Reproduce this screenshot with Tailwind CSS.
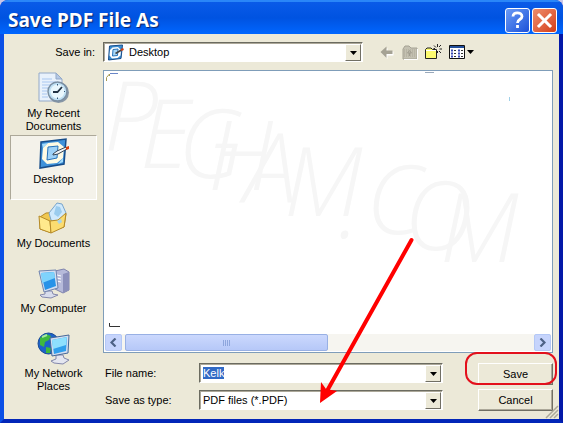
<!DOCTYPE html>
<html lang="en">
<head>
  <meta charset="UTF-8" />
  <meta name="viewport" content="width=device-width, initial-scale=1.0" />
  <title>Save PDF File As</title>
  <script src="https://cdn.jsdelivr.net/npm/@tailwindcss/browser@4"></script>
</head>
<body class="relative min-h-screen flex flex-col bg-[#c9c6e8] font-['Liberation_Sans',Arial,sans-serif] text-[11px] leading-[13px] text-black">
  <div class="flex-1 flex flex-col rounded-t-lg overflow-hidden bg-[#0a35c8]">

    <!-- Title bar -->
    <header class="h-[34px] shrink-0 flex items-center gap-[2px] pl-2 pr-[6px] pt-1 bg-linear-to-b from-[#0a5be8] via-[#0053e1] to-[#0066ff] border-t-2 border-[#2a86f8]">
      <h1 class="flex-1 font-['Noto_Sans',sans-serif] text-[19px] leading-6 font-bold text-white [text-shadow:1px_1px_1px_#0a246a]">Save PDF File As</h1>
      <button aria-label="Help" class="size-[25px] rounded-[3px] border border-white bg-linear-to-br from-[#6c9bf5] to-[#1c4fd8] flex items-center justify-center">
        <svg width="15" height="18" viewBox="0 0 15 18" fill="none" stroke="#fff" stroke-width="2.8"><path d="M3 5.5C3 2.8 5 1.8 7.3 1.8S12 3 12 5.5C12 8.5 7.5 8 7.5 12"/><path d="M7.5 14v3"/></svg>
      </button>
      <button aria-label="Close" class="size-[25px] rounded-[3px] border border-white bg-linear-to-br from-[#ee8d6c] to-[#d33b12] flex items-center justify-center">
        <svg width="17" height="17" viewBox="0 0 17 17" stroke="#fff" stroke-width="3" stroke-linecap="square"><path d="M3 3l11 11M14 3L3 14"/></svg>
      </button>
    </header>

    <div class="flex-1 flex flex-col bg-[#ece9d8] border-4 border-t-0 border-l-[#0b50e6] border-r-[#0318a8] border-b-[#0226b8] pb-2 pr-[6px]">

      <!-- Toolbar -->
      <div class="h-9 flex items-center">
        <label for="folder" class="w-[99px] pr-2 text-right">Save in:</label>
        <div class="relative w-[260px] h-5">
          <select id="folder" class="appearance-none w-full h-full pl-[25px] bg-white border border-t-[#6b6b60] border-l-[#6b6b60] border-b-white border-r-white shadow-[inset_1px_1px_0_#aca899] outline-none">
            <option>Desktop</option>
          </select>
          <svg class="absolute left-1 top-[2px] pointer-events-none" width="17" height="17" viewBox="0 0 34 32"><path d="M5 3l26-2-3 27-25 3z" fill="#3c8fd2" stroke="#174d8a" stroke-width="2"/><path d="M11 6l11-1 6 6-1 11-6 5-11 1-5-6 1-11z" fill="#fff"/><path d="M12 10l10-1-1 13-10 1z" fill="#a8d8f8" stroke="#2773b8" stroke-width="2"/><path d="M17 18l12-7" stroke="#444" stroke-width="3"/><path d="M28 11l5-2" stroke="#d43c10" stroke-width="4"/></svg>
          <span class="absolute right-[2px] top-[2px] w-4 h-[17px] bg-[#ece9d8] border border-t-white border-l-white border-r-[#716f64] border-b-[#716f64] flex items-center justify-center pointer-events-none">
            <svg width="7" height="4" viewBox="0 0 7 4"><path d="M0 0h7L3.5 4z"/></svg>
          </span>
        </div>
        <div class="flex items-center gap-[7px] ml-[17px]">
          <button aria-label="Back" class="pr-[1px]">
            <svg width="14" height="14" viewBox="0 0 14 14"><path d="M1.500 8L7.500 3v3.500h6v4H7.500v3.500z" fill="#fff"/><path d="M.5 7L6.500 1.500v4H12.500v3.500H6.500v4z" fill="#a5a294"/></svg>
          </button>
          <button aria-label="Up one level">
            <svg width="16" height="15" viewBox="0 0 16 15"><path d="M1 4l2-3h4l2 2h6v11H1z" fill="#c4c1b2" stroke="#a5a294"/><path d="M15.500 4v10.500H2" stroke="#fff" fill="none"/><path d="M2 5h12M2 7h12M2 9h12M2 11h12" stroke="#aaa797" stroke-dasharray="1 1"/><path d="M5.500 8l2-2.500 2 2.500zM7.500 8v3" stroke="#a09d90" fill="none"/></svg>
          </button>
          <button aria-label="Create new folder">
            <svg width="17" height="16" viewBox="0 0 17 16"><path d="M.5 14.500v-9l1.500-1.500h4l1.500 1.500h4v9z" fill="#fdfb70" stroke="#222"/><path d="M1 6.500h10" stroke="#fff"/><path d="M12.500 0v3M12.500 7v2M9 1.500l2 2M16 1l-2 2M14.500 5H17M14 7l2 2M8.500 4.500H10" stroke="#222"/></svg>
          </button>
          <button aria-label="View menu" class="flex items-center gap-[2px]">
            <svg width="16" height="14" viewBox="0 0 16 14"><path d="M.5.5h15v13H.5z" fill="#fff" stroke="#111"/><path d="M1 2h14" stroke="#234f9c" stroke-width="2"/><path d="M2 5.500h2M9 5.500h2M2 8.500h2M9 8.500h2M2 11.500h2M9 11.500h2" stroke="#3a4ab8" stroke-width="2"/><path d="M5 5.500h2M12 5.500h2M5 8.500h2M12 8.500h2M5 11.500h2M12 11.500h2" stroke="#333"/></svg>
            <svg width="7" height="4" viewBox="0 0 7 4"><path d="M0 0h7L3.500 4z"/></svg>
          </button>
        </div>
      </div>

      <div class="flex-1 flex">
        <!-- Places bar -->
        <nav class="w-[87px] ml-[6px] mr-[6px] flex flex-col text-center">
          <button class="h-[65px] flex flex-col items-center pt-[2px] gap-[2px]">
            <svg width="34" height="33" viewBox="0 0 34 33"><path d="M2 1h17l6 6v22H2z" fill="#e8f1fc" stroke="#93a9c8"/><path d="M19 1v6h6z" fill="#b4c8e6" stroke="#93a9c8"/><path d="M5 7h10M5 10h14M5 13h8M5 16h6M5 19h5M5 22h5M5 25h6" stroke="#a9c7f0"/><circle cx="21.500" cy="20.500" r="10.500" fill="#8796a5"/><circle cx="20.500" cy="19.500" r="9.500" fill="#bfe0f4" stroke="#7b8fa3" stroke-width="1.500"/><circle cx="20.500" cy="19.500" r="7" fill="#e9f7fd"/><path d="M25 15l-4.500 5H16" stroke="#234" stroke-width="1.800" fill="none"/><path d="M20.500 12v1.500M20.500 25.500V27M27 19.500h1" stroke="#357"/></svg>
            <span>My Recent<br />Documents</span>
          </button>
          <button class="h-[65px] flex flex-col items-center pt-[2px] gap-[3px] bg-[#f4f2ea] border border-t-[#aca899] border-l-[#aca899] border-b-white border-r-white">
            <svg width="34" height="32" viewBox="0 0 34 32"><path d="M4 4l25-3-2 25-24 4z" fill="#3f92da" stroke="#174d8a" stroke-width="1.500"/><path d="M5 6l6-1-5 5zM26 24l-5 2 5-6z" fill="#a4dcfc"/><path d="M11 5l10-1 6 5-1 11-6 5-10 1-5-5 1-11z" fill="#fffbe4"/><path d="M11 9l10-1-1 12-10 2z" fill="#9ed2f8" stroke="#2672ba"/><path d="M16 16l4-3 9-4 1 2-9 5-5 1z" fill="#f0f4f8" stroke="#345"/><path d="M29 9l3-1v3l-3 1z" fill="#d8410f"/></svg>
            <span>Desktop</span>
          </button>
          <button class="h-[65px] flex flex-col items-center pt-[2px] gap-[2px]">
            <svg width="34" height="33" viewBox="0 0 34 33"><path d="M3 15l6-4 17-1 3 2-2 13-15 5-9-3z" fill="#f0c850" stroke="#b58a28"/><path d="M12 11l8-10 5 1 4 9-7 13-8-6z" fill="#cfe9fc" stroke="#78a5cc"/><path d="M19 4l4 1 2 5-4 5-4-3z" fill="#9accee"/><path d="M2 14l11 5 1 12-11-4z" fill="#ffe98c" stroke="#b58a28"/><path d="M13 19l8-1 8-7-2 14-13 6z" fill="#fbdc70" stroke="#b58a28"/><path d="M20 19l4-2 1 3-3 2z" fill="#a8d4e8"/></svg>
            <span>My Documents</span>
          </button>
          <button class="h-[65px] flex flex-col items-center pt-[2px] gap-[2px]">
            <svg width="34" height="33" viewBox="0 0 34 33"><path d="M18 4l9-2 5 3v18l-6 3-8-4z" fill="#b6bada" stroke="#7f83ac"/><path d="M26 7l6-2v18l-6 3z" fill="#8b8fba"/><path d="M20 8l4 1M20 11l4 1M20 14l4 1" stroke="#fff"/><path d="M8 24l7 0 1 3 5 1-7 3-9-1-2-2 5-1z" fill="#d8dcec" stroke="#8488ac"/><path d="M2 4l17-1 2 18-14 4z" fill="#d4def0" stroke="#6f83ae"/><path d="M4 6l13-1 2 14-11 4z" fill="#2792e8"/><path d="M4 6l13-1 1 6-13 5z" fill="#7fd3fc"/></svg>
            <span>My Computer</span>
          </button>
          <button class="h-[65px] flex flex-col items-center pt-[2px] gap-[2px]">
            <svg width="34" height="33" viewBox="0 0 34 33"><circle cx="11.500" cy="11.500" r="10.500" fill="#1d62c8" stroke="#174a94"/><path d="M3 6l6-4 5 2-2 4-4 2-1 5-4-2zM9 15l5 1-1 5-4 0z" fill="#3fb83d"/><path d="M5 5l5-2" stroke="#a6e8a0" stroke-width="2"/><path d="M19 23l7 0 1 3 5 2-6 4-9-1-3-2 5-2z" fill="#e4e6f0" stroke="#8488ac"/><path d="M13 6l19-3-1 18-16 3z" fill="#d4def0" stroke="#466797"/><path d="M15 8l15-3-1 14-12 3z" fill="#309fec"/><path d="M15 8l15-3-1 8-13 4z" fill="#8ee0fe"/></svg>
            <span>My Network<br />Places</span>
          </button>
        </nav>

        <main class="flex-1 flex flex-col">
          <!-- File list -->
          <section aria-label="Files" class="flex-1 flex flex-col justify-between bg-white border border-[#7f9db9] p-px overflow-hidden">
            <svg width="14" height="10" viewBox="0 0 14 10" fill="none"><path d="M5 1.500h8" stroke="#6a86c8"/><path d="M1.500 9V5.500L4.500 2v2" stroke="#a89a50"/></svg>
            <div>
              <svg class="ml-1 mb-[6px]" width="12" height="5" viewBox="0 0 12 5" fill="none"><path d="M.5 0v3.500H11" stroke="#333"/></svg>
              <div class="h-[17px] flex gap-[3px] bg-[#f6f5f0]">
                <button aria-label="Scroll left" class="w-[17px] rounded-[2px] border border-[#b4c8f6] bg-[#c6d4fc] flex items-center justify-center">
                  <svg width="7" height="9" viewBox="0 0 7 9" fill="none" stroke="#4d6185" stroke-width="2.200"><path d="M5.500 .5l-4 4 4 4"/></svg>
                </button>
                <div class="flex-1">
                  <div class="w-1/2 h-full rounded-[2px] border border-[#98b0e4] bg-linear-to-b from-[#cbd8fd] to-[#b6c8f8] flex items-center justify-center">
                    <svg width="8" height="6" viewBox="0 0 8 6"><path d="M.5 0v6M2.500 0v6M4.500 0v6M6.500 0v6" stroke="#8ea6dd"/></svg>
                  </div>
                </div>
                <button aria-label="Scroll right" class="w-[17px] rounded-[2px] border border-[#b4c8f6] bg-[#c6d4fc] flex items-center justify-center">
                  <svg width="7" height="9" viewBox="0 0 7 9" fill="none" stroke="#4d6185" stroke-width="2.200"><path d="M1.500 .5l4 4-4 4"/></svg>
                </button>
              </div>
            </div>
          </section>

          <!-- Name, type and actions -->
          <div class="flex gap-[35px] pt-[10px]">
            <div class="flex-1 flex flex-col gap-[7px]">
              <div class="flex items-center">
                <label for="fileName" class="w-24 pl-[2px]">File name:</label>
                <div class="relative flex-1 h-5">
                  <input id="fileName" type="text" value="Kelk" class="w-full h-full pl-[3px] bg-white border border-t-[#6b6b60] border-l-[#6b6b60] border-b-white border-r-white shadow-[inset_1px_1px_0_#aca899] outline-none selection:bg-[#316ac5] selection:text-white" />
                  <span class="absolute right-[2px] top-[2px] w-4 h-[17px] bg-[#ece9d8] border border-t-white border-l-white border-r-[#716f64] border-b-[#716f64] flex items-center justify-center pointer-events-none">
                    <svg width="7" height="4" viewBox="0 0 7 4"><path d="M0 0h7L3.500 4z"/></svg>
                  </span>
                </div>
              </div>
              <div class="flex items-center">
                <label for="fileType" class="w-24 pl-[2px]">Save as type:</label>
                <div class="relative flex-1 h-5">
                  <select id="fileType" class="appearance-none w-full h-full pl-[3px] bg-white border border-t-[#6b6b60] border-l-[#6b6b60] border-b-white border-r-white shadow-[inset_1px_1px_0_#aca899] outline-none">
                    <option>PDF files (*.PDF)</option>
                  </select>
                  <span class="absolute right-[2px] top-[2px] w-4 h-[17px] bg-[#ece9d8] border border-t-white border-l-white border-r-[#716f64] border-b-[#716f64] flex items-center justify-center pointer-events-none">
                    <svg width="7" height="4" viewBox="0 0 7 4"><path d="M0 0h7L3.500 4z"/></svg>
                  </span>
                </div>
              </div>
            </div>
            <div class="w-[75px] flex flex-col gap-1">
              <button class="h-[22px] bg-[#ece9d8] border border-t-white border-l-white border-r-[#716f64] border-b-[#716f64] shadow-[inset_-1px_-1px_0_#aca899]">Save</button>
              <button class="h-[22px] bg-[#ece9d8] border border-t-white border-l-white border-r-[#716f64] border-b-[#716f64] shadow-[inset_-1px_-1px_0_#aca899]">Cancel</button>
            </div>
          </div>
        </main>
      </div>
    </div>
  </div>

  <!-- Watermark and callouts drawn over the dialog -->
  <svg class="absolute left-0 top-0 pointer-events-none" width="563" height="423" viewBox="0 0 563 423" fill="none">
    <text x="104 140 178 208 244 284 338 366 404 440" y="150 168 178 190 202 216 238 234 250 262" fill="#f6f6f6" font-size="96" font-weight="300" font-style="italic" font-family="Open Sans, Liberation Sans, sans-serif">PEGHAM.COM</text>
    <path d="M425 72.500h9" stroke="#9aa9bb" />
    <path d="M509.500 97v4" stroke="#9fd0e8" />
    <path d="M411.500 240L327 391" stroke="#f00" stroke-width="4" stroke-linecap="round" />
    <path d="M320 403l1-21 5 7 11 2z" fill="#f00" />
    <rect x="466" y="353" width="90" height="31" rx="11" stroke="#e3101c" stroke-width="2" />
    <path d="M546 418l12-12M550 418l8-8M554 418l4-4" stroke="#aca899" stroke-width="1.500" />
  </svg>

  <script>
    const fileName = document.getElementById("fileName");
    fileName.focus();
    fileName.select();
  </script>
</body>
</html>
